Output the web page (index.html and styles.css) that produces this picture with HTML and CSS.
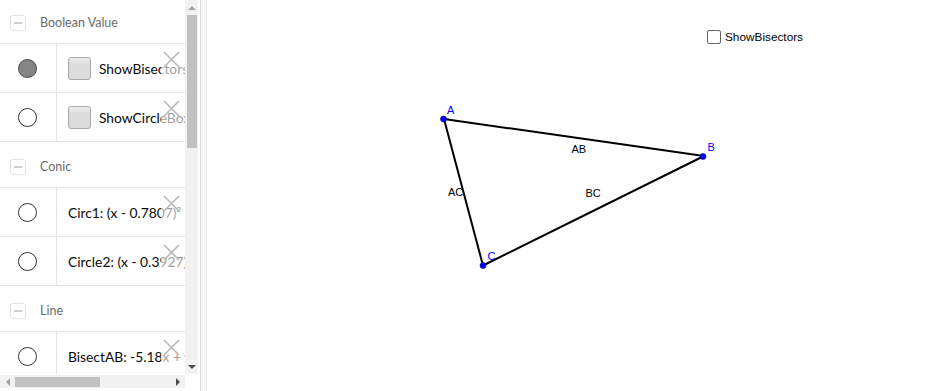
FILE: index.html
```html
<!DOCTYPE html>
<html>
<head>
<meta charset="utf-8">
<link rel="stylesheet" href="styles.css">
</head>
<body>
<div class="app">
  <div class="algebra">
    <div class="av-main">
      <div class="av-content">
        <div class="list">
          <div class="group"><span class="minus"></span><span class="group-name">Boolean Value</span></div>
          <div class="item">
            <div class="vis"><span class="dot on"></span></div>
            <div class="def"><span class="bool"></span><span class="txt">ShowBisectorsl</span></div>
            <div class="del"><svg width="17" height="17" viewBox="0 0 17 17"><path d="M1 1L16 16M16 1L1 16"/></svg></div>
          </div>
          <div class="item">
            <div class="vis"><span class="dot"></span></div>
            <div class="def"><span class="bool"></span><span class="txt">ShowCircleBox</span></div>
            <div class="del"><svg width="17" height="17" viewBox="0 0 17 17"><path d="M1 1L16 16M16 1L1 16"/></svg></div>
          </div>
          <div class="group"><span class="minus"></span><span class="group-name">Conic</span></div>
          <div class="item">
            <div class="vis"><span class="dot"></span></div>
            <div class="def plain"><span class="txt">Circ1: (x - 0.7807)²</span></div>
            <div class="del"><svg width="17" height="17" viewBox="0 0 17 17"><path d="M1 1L16 16M16 1L1 16"/></svg></div>
          </div>
          <div class="item">
            <div class="vis"><span class="dot"></span></div>
            <div class="def plain"><span class="txt">Circle2: (x - 0.3927)</span></div>
            <div class="del"><svg width="17" height="17" viewBox="0 0 17 17"><path d="M1 1L16 16M16 1L1 16"/></svg></div>
          </div>
          <div class="group"><span class="minus"></span><span class="group-name">Line</span></div>
          <div class="item">
            <div class="vis"><span class="dot"></span></div>
            <div class="def plain"><span class="txt">BisectAB: -5.18x + y = 2.3</span></div>
            <div class="del"><svg width="17" height="17" viewBox="0 0 17 17"><path d="M1 1L16 16M16 1L1 16"/></svg></div>
          </div>
        </div>
      </div>
      <div class="vscroll">
        <div class="arrow-box"><span class="tri up"></span></div>
        <div class="vtrack"><div class="vthumb"></div></div>
        <div class="arrow-box"><span class="tri down"></span></div>
      </div>
    </div>
    <div class="av-bottom">
      <div class="hscroll">
        <div class="harrow"><span class="tri left"></span></div>
        <div class="htrack"><div class="hthumb"></div></div>
        <div class="harrow"><span class="tri right"></span></div>
      </div>
      <div class="corner"></div>
    </div>
  </div>
  <div class="divider"></div>
  <div class="canvas">
    <svg class="graphics" viewBox="207 0 720 391" width="720" height="391">
      <g class="segs">
        <line x1="444" y1="119" x2="704" y2="156"/>
        <line x1="704" y1="156" x2="483" y2="265.5"/>
        <line x1="483" y1="265.5" x2="444" y2="119"/>
      </g>
      <g class="pts">
        <circle cx="443.5" cy="119" r="3"/>
        <circle cx="703" cy="156.5" r="3"/>
        <circle cx="483" cy="265.5" r="3"/>
      </g>
      <g class="plabels">
        <text x="447" y="113.5">A</text>
        <text x="707.5" y="151">B</text>
        <text x="487.5" y="259.5">C</text>
      </g>
      <g class="slabels">
        <text x="571.5" y="152.5">AB</text>
        <text x="448" y="196">AC</text>
        <text x="585.5" y="197">BC</text>
      </g>
    </svg>
    <label class="cb"><span class="cb-box"></span><span class="cb-text">ShowBisectors</span></label>
  </div>
</div>
</body>
</html>
```
FILE: styles.css
```css
* { box-sizing: border-box; }
html, body { margin: 0; padding: 0; background: #fff; }
body { width: 927px; height: 391px; overflow: hidden; font-family: Lato, "Liberation Sans", sans-serif; }

.app { display: flex; height: 391px; }

.algebra { width: 200px; height: 391px; display: flex; flex-direction: column; padding-right: 2px; }
.av-main { display: flex; height: 374px; }
.av-content { width: 185px; height: 374px; overflow: hidden; }
.list { margin-top: -2px; }

.group { height: 46px; border-bottom: 1px solid #e4e4e4; display: flex; align-items: center; padding: 4px 0 0 10px; }
.minus { width: 16px; height: 16px; border: 1px solid #e2e2e2; border-radius: 3px; display: flex; align-items: center; justify-content: center; }
.minus::before { content: ""; width: 8px; height: 2px; background: #cfcfcf; }
.group-name { margin-left: 14px; font-size: 12.5px; color: #6b6b6b; }

.item { position: relative; height: 49px; border-bottom: 1px solid #e4e4e4; display: flex; }
.vis { width: 57px; flex: none; border-right: 1px solid #e4e4e4; display: flex; align-items: center; justify-content: center; padding-right: 1px; }
.dot { width: 19px; height: 19px; border-radius: 50%; border: 1px solid #333; background: #fff; }
.dot.on { background: #858585; border-color: #4a4a4a; }
.def { display: flex; align-items: center; padding-left: 11px; white-space: nowrap; padding-top: 1px; }
.bool { width: 23px; height: 23px; flex: none; border: 1px solid #a9a9a9; border-radius: 3px; background: linear-gradient(#eeeeee, #dcdcdc 30%, #dcdcdc); margin-right: 8px; }
.txt { font-size: 13.8px; color: #0a0a0a; }
.del { position: absolute; right: 0; top: 0; bottom: 0; width: 24px; background: rgba(255,255,255,0.6); }
.del svg { position: absolute; right: 5px; top: 7px; }
.del path { stroke: #b8b8b8; stroke-width: 1.6; fill: none; }

.vscroll { width: 13px; height: 374px; background: #f1f1f1; display: flex; flex-direction: column; }
.arrow-box { height: 15px; display: flex; align-items: center; justify-content: center; flex: none; }
.vtrack { flex: 1; padding: 0 1px 0 2px; }
.vthumb { height: 133px; background: #c1c1c1; }
.tri { width: 0; height: 0; border-style: solid; }
.tri.up { border-width: 0 4px 4px 4px; border-color: transparent transparent #a3a3a3 transparent; }
.tri.down { border-width: 4px 4px 0 4px; border-color: #505050 transparent transparent transparent; }
.tri.left { border-width: 4px 4px 4px 0; border-color: transparent #a3a3a3 transparent transparent; }
.tri.right { border-width: 4px 0 4px 4px; border-color: transparent transparent transparent #505050; }

.av-bottom { display: flex; height: 13px; margin-top: 1px; }
.hscroll { width: 185px; height: 13px; background: #f1f1f1; display: flex; }
.harrow { width: 15px; flex: none; display: flex; align-items: center; justify-content: center; }
.htrack { flex: 1; padding: 2px 0 1px 0; }
.hthumb { width: 85px; height: 100%; background: #c1c1c1; }
.corner { width: 13px; background: #fff; }

.divider { width: 7px; flex: none; border-left: 1px solid #dadada; border-right: 1px solid #e6e6e6; background: #f6f6f6; }

.canvas { position: relative; flex: 1; height: 391px; }
.graphics { display: block; }
.segs line { stroke: #000; stroke-width: 2; }
.pts circle { fill: #0000ff; stroke: #00008a; stroke-width: 0.6; }
.graphics text { font-family: "Liberation Sans", Arial, sans-serif; font-size: 11px; }
.plabels text { fill: #0000ff; }
.slabels text { fill: #000; }

.cb { position: absolute; left: 500px; top: 30px; display: flex; align-items: center; }
.cb-box { width: 14px; height: 14px; border: 1px solid #666; border-radius: 2px; background: #fff; }
.cb-text { margin-left: 4px; font-family: "Liberation Sans", Arial, sans-serif; font-size: 11.8px; color: #000; }
```
